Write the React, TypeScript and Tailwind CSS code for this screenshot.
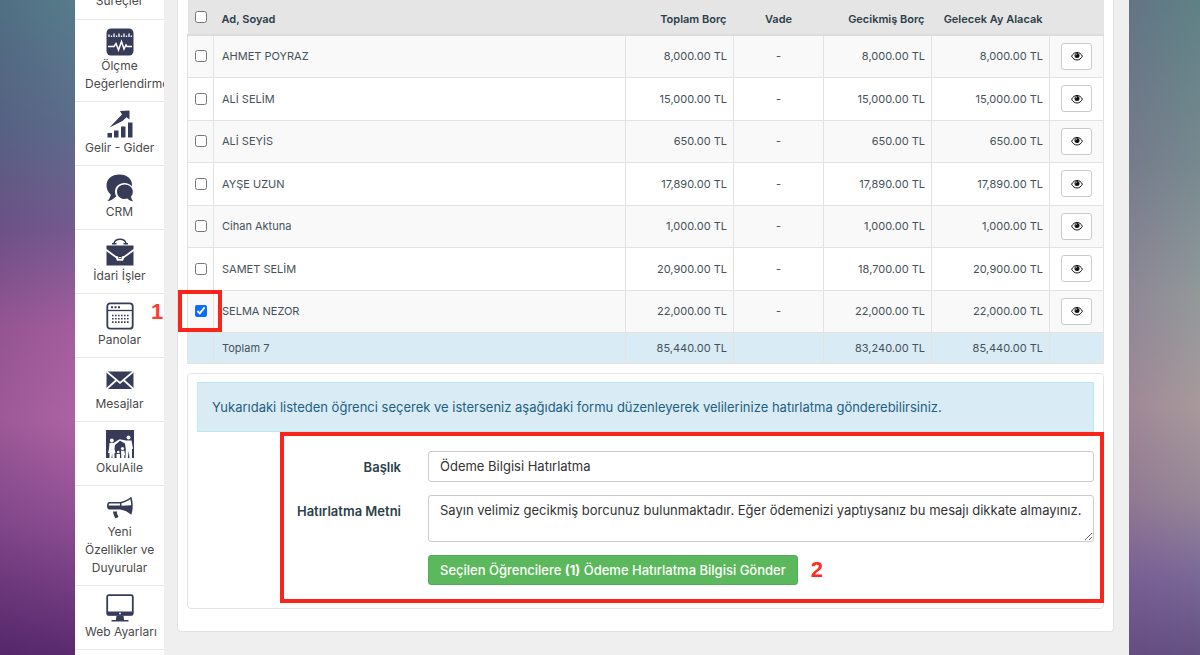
import React, { useState } from "react";

type Student = {
  name: string;
  total: string;
  overdue: string;
  nextMonth: string;
};

const students: Student[] = [
  { name: "AHMET POYRAZ", total: "8,000.00 TL", overdue: "8,000.00 TL", nextMonth: "8,000.00 TL" },
  { name: "ALİ SELİM", total: "15,000.00 TL", overdue: "15,000.00 TL", nextMonth: "15,000.00 TL" },
  { name: "ALİ SEYİS", total: "650.00 TL", overdue: "650.00 TL", nextMonth: "650.00 TL" },
  { name: "AYŞE UZUN", total: "17,890.00 TL", overdue: "17,890.00 TL", nextMonth: "17,890.00 TL" },
  { name: "Cihan Aktuna", total: "1,000.00 TL", overdue: "1,000.00 TL", nextMonth: "1,000.00 TL" },
  { name: "SAMET SELİM", total: "20,900.00 TL", overdue: "18,700.00 TL", nextMonth: "20,900.00 TL" },
  { name: "SELMA NEZOR", total: "22,000.00 TL", overdue: "22,000.00 TL", nextMonth: "22,000.00 TL" },
];

const Icon: React.FC<{ children: React.ReactNode }> = ({ children }) => (
  <svg viewBox="0 0 28 28" className="size-7 fill-[#363c58]" aria-hidden="true">
    {children}
  </svg>
);

const MeasureIcon = () => (
  <Icon>
    <rect x="0.5" y="0.5" width="27" height="27" rx="4.5" />
    <path
      d="M3 6.500V9M5.500 7.500V9M8 5.500V9M10.500 7.500V9M13 5.500V9M15.500 7.500V9M18 5.500V9M20.500 7.500V9M23 5.500V9M25.300 7.500V9"
      stroke="#fff"
      strokeWidth="1.300"
    />
    <path
      d="M2 18.500h6l2-3 2.500 6.500 3-8.500 2.500 7.500 2-4 1 1.500h5"
      fill="none"
      stroke="#fff"
      strokeWidth="1.500"
    />
  </Icon>
);

const IncomeIcon = () => (
  <Icon>
    <path d="M1.500 23H6v4.500H1.500zM8 20.500h4.500v7H8zM15 16.500h4.500v11H15zM22 12.500h4.500v15H22z" />
    <path d="M3.500 17.500 16 4.500 14 1l9.500-.5v9l-3-2.300L16.500 11z" />
  </Icon>
);

const CrmIcon = () => (
  <Icon>
    <path d="M13.500.5C5.800.5.500 5 .500 11.300c0 4 1.600 7 4.300 9.200-.3 2.600-1.500 4.800-3.500 6.500 3.200-.1 6.100-1.600 8-4l1.200-.2c-1-1.600-1.500-3.300-1.500-5.200 0-5 4-8.700 9.300-8.700 3.200 0 6 1.300 7.700 3.500C26.700 5.300 21.300.5 13.500.5z" />
    <path d="M18.700 10.600c-4.400 0-7.700 3-7.700 7.100 0 4.300 3.300 7.300 7.700 7.300.9 0 1.800-.1 2.600-.4 1.500 1.700 3.600 2.600 6 2.700-1.400-1.300-2.200-2.800-2.300-4.700 1.200-1.300 1.800-3 1.800-4.900 0-4.100-3.700-7.100-8.100-7.100z" />
  </Icon>
);

const BriefcaseIcon = () => (
  <Icon>
    <path
      d="M8 5.500C8.500 2.500 10.500 1.200 14 1.200s5.500 1.300 6 4.300"
      fill="none"
      stroke="#363c58"
      strokeWidth="1.500"
    />
    <path d="M6 5h4.500v1.500H6zM17.500 5H22v1.500h-4.500z" />
    <path d="M0.500 7.500h27v3.500l-9.500 7h-8L0.500 11z" />
    <path d="M0.500 13.200 9.800 20l1.200 2.700h6l1.200-2.700 9.300-6.800V27.500h-27z" />
    <path d="M11.500 17.500h5l-1 3.500h-3z" />
    <path d="M12.500 19h3v1.300h-3z" fill="#fff" />
  </Icon>
);

const CalendarIcon = () => (
  <Icon>
    <rect x="1.300" y="1.300" width="25.400" height="25.400" rx="3" fill="#fff" stroke="#363c58" strokeWidth="1.800" />
    <path d="M1 8.500h26" stroke="#363c58" strokeWidth="1.300" />
    <path d="M5 5.200h9" stroke="#363c58" strokeWidth="2" strokeDasharray="2 1.500" />
    <path
      d="M6 13.500h17M6 16.800h17M6 20.100h17"
      stroke="#363c58"
      strokeWidth="1.600"
      strokeDasharray="1.600 1.400"
    />
  </Icon>
);

const MailIcon = () => (
  <Icon>
    <rect x="0.500" y="5.500" width="27" height="17.500" />
    <path
      d="M.5 5.500 14 17 27.500 5.500M.5 23 10.500 14M27.500 23 17.500 14"
      fill="none"
      stroke="#fff"
      strokeWidth="1.700"
    />
  </Icon>
);

const FamilyIcon = () => (
  <Icon>
    <path d="M-.5 0h29v28h-29z" />
    <g fill="#fff">
      <circle cx="5.800" cy="10.500" r="1.900" />
      <path d="M3.500 13h4L13.500 9.300l.8 1.200L9 15l-.5 4 1 4H8.500v5h-2l-.4-4.500-.6 4.500h-2V23H2l1-4z" />
      <circle cx="22.500" cy="7.500" r="2" />
      <path d="M13.700 9.200 20 10.500h5.500l1.500 8-1 .8V28h-2.500l-.8-7-.9 7h-2.300l.3-9-.8-5.500-5.300-3z" />
      <circle cx="16.500" cy="18.500" r="1.600" />
      <path d="M15 20.700h3.300l.8 4-.8.5V28h-3z" />
      <circle cx="12.300" cy="22" r="1.300" />
      <path d="M10.500 24H14v4h-3.500z" />
    </g>
  </Icon>
);

const MegaphoneIcon = () => (
  <Icon>
    <path d="M3.500 8H14v7.500H3.500C1.800 15.500 1 14.200 1 11.800S1.800 8 3.500 8z" />
    <path d="M3.700 9.500H14v2H2.600c0-1.200.3-2 1.100-2z" fill="#fff" />
    <path d="M14 8c4.500-.8 8.200-2.500 11.300-5.200 1 2.600 1.400 5.700 1.400 9s-.4 6.400-1.400 9c-3.100-2.800-6.800-4.600-11.300-5.300z" />
    <path d="M15.500 9.300c3.500-.8 6.300-2.200 8.800-4.200.6 2 .8 4 .9 6.200l-9.700.4z" fill="#fff" />
    <path d="M7 17.500h4.300l-.5 1.500 1.700 4-3.200 1.500L7.500 20z" />
  </Icon>
);

const MonitorIcon = () => (
  <Icon>
    <rect x="1.200" y="1.200" width="25.600" height="19.600" rx="1.500" fill="#fff" stroke="#363c58" strokeWidth="1.800" />
    <path d="M1 17.500h26v3.800H1z" />
    <circle cx="14" cy="19.400" r="0.900" fill="#fff" />
    <path d="M10.500 21.500h7l.7 5h-8.400z" />
    <path d="M5.500 26h17v1.500h-17z" />
  </Icon>
);

const menu = [
  { lines: ["Ölçme", "Değerlendirme"], icon: <MeasureIcon /> },
  { lines: ["Gelir - Gider"], icon: <IncomeIcon /> },
  { lines: ["CRM"], icon: <CrmIcon /> },
  { lines: ["İdari İşler"], icon: <BriefcaseIcon /> },
  { lines: ["Panolar"], icon: <CalendarIcon /> },
  { lines: ["Mesajlar"], icon: <MailIcon /> },
  { lines: ["OkulAile"], icon: <FamilyIcon /> },
  { lines: ["Yeni", "Özellikler ve", "Duyurular"], icon: <MegaphoneIcon /> },
  { lines: ["Web Ayarları"], icon: <MonitorIcon /> },
];

const EyeIcon = () => (
  <svg viewBox="0 0 12 10" className="h-[10px] w-3" aria-hidden="true">
    <path
      d="M.6 5.200C1.900 2.800 3.700 1.400 6 1.400s4.100 1.400 5.400 3.800C10.100 7.600 8.300 9 6 9S1.900 7.600.6 5.200z"
      fill="#fff"
      stroke="#111"
      strokeWidth="1"
    />
    <circle cx="6" cy="4.500" r="2.500" fill="#111" />
    <path d="M4.600 4.300c.1-.8.600-1.300 1.400-1.400" fill="none" stroke="#fff" strokeWidth="0.700" />
  </svg>
);

const Sidebar = () => (
  <nav className="w-[89px] shrink-0 overflow-hidden bg-white text-center text-xs leading-[18px] text-[#4a4a4a]">
    <a href="#surecler" className="-mt-2 block border-b border-[#e8e8e8] pb-[9px]">
      Süreçler
    </a>
    {menu.map((item) => (
      <a
        key={item.lines[0]}
        href="#menu"
        className="flex flex-col items-center border-b border-[#e8e8e8] px-[10px] pt-2 pb-2"
      >
        {item.icon}
        <span className="w-full pt-px whitespace-nowrap">
          {item.lines.map((line) => (
            <span key={line} className="block">
              {line}
            </span>
          ))}
        </span>
      </a>
    ))}
  </nav>
);

const cell = "border border-[#e3e3e3] px-2";
const numberCell = "border border-[#e3e3e3] px-[6px] text-right";
const checkbox = "block size-3 accent-[#0b6cf5]";

const App: React.FC = () => {
  const [selected, setSelected] = useState<string[]>(["SELMA NEZOR"]);

  const toggle = (name: string) =>
    setSelected((prev) => (prev.includes(name) ? prev.filter((n) => n !== name) : [...prev, name]));

  const toggleAll = () =>
    setSelected(selected.length === students.length ? [] : students.map((s) => s.name));

  return (
    <div className="flex h-screen overflow-hidden font-['Inter',sans-serif]">
      <div className="w-[75px] shrink-0 bg-[linear-gradient(90deg,rgba(40,20,70,0.12),rgba(255,255,255,0)),linear-gradient(180deg,#567c8b_0%,#5d6b8b_20%,#75598f_35%,#a35d9d_50%,#ad63a3_64%,#8c4d92_80%,#5a2a6f_100%)]" />

      <div className="flex min-w-0 flex-1 bg-[#efefef]">
        <Sidebar />

        <main className="min-w-0 flex-1 pr-[15px] pl-[13px]">
          <div className="rounded-b border-x border-b border-[#e2e2e2] bg-white px-[9px] pb-[22px]">
            <table className="w-full table-fixed border-collapse text-[11px] leading-4 text-[#45525a]">
              <colgroup>
                <col className="w-[26px]" />
                <col />
                <col className="w-[108px]" />
                <col className="w-[90px]" />
                <col className="w-[108px]" />
                <col className="w-[118px]" />
                <col className="w-[54px]" />
              </colgroup>
              <thead>
                <tr className="h-[35px] border-b-2 border-[#dcdcdc] bg-[#e5e5e5] text-[#2b3f49]">
                  <th className="px-[7px]">
                    <input
                      type="checkbox"
                      aria-label="Tümünü seç"
                      className={checkbox}
                      checked={selected.length === students.length}
                      onChange={toggleAll}
                    />
                  </th>
                  <th className="px-2 pt-1 text-left font-semibold">Ad, Soyad</th>
                  <th className="px-[7px] pt-1 text-right font-semibold">Toplam Borç</th>
                  <th className="px-2 pt-1 text-center font-semibold">Vade</th>
                  <th className="px-[7px] pt-1 text-right font-semibold">Gecikmiş Borç</th>
                  <th className="px-[7px] pt-1 text-right font-semibold whitespace-nowrap">Gelecek Ay Alacak</th>
                  <td />
                </tr>
              </thead>
              <tbody>
                {students.map((s) => (
                  <tr key={s.name} className="h-[42px] odd:bg-[#f9f9f9] even:h-[43px]">
                    <td className="relative border border-[#e3e3e3] px-[7px]">
                      <input
                        type="checkbox"
                        aria-label={s.name}
                        className={checkbox}
                        checked={selected.includes(s.name)}
                        onChange={() => toggle(s.name)}
                      />
                      {s.name === "SELMA NEZOR" && (
                        <>
                          <span className="pointer-events-none absolute -top-px -left-[10px] h-[42px] w-11 border-4 border-[#fb241b]" />
                          <span className="absolute top-[9px] -left-[37px] font-['Liberation_Sans',sans-serif] text-[22px] leading-6 font-bold text-[#ff3b30]">
                            1
                          </span>
                        </>
                      )}
                    </td>
                    <td className={cell}>{s.name}</td>
                    <td className={numberCell}>{s.total}</td>
                    <td className={`${cell} text-center`}>-</td>
                    <td className={numberCell}>{s.overdue}</td>
                    <td className={numberCell}>{s.nextMonth}</td>
                    <td className="border border-[#e3e3e3] px-[11px]">
                      <button
                        type="button"
                        aria-label={`${s.name} detay`}
                        className="flex h-[27px] w-[31px] items-center justify-center rounded-[3px] border border-[#ccc] bg-white"
                      >
                        <EyeIcon />
                      </button>
                    </td>
                  </tr>
                ))}
              </tbody>
              <tfoot>
                <tr className="h-[31px] bg-[#d9ebf5]">
                  <td className={cell} />
                  <td className={cell}>Toplam 7</td>
                  <td className={numberCell}>85,440.00 TL</td>
                  <td className={cell} />
                  <td className={numberCell}>83,240.00 TL</td>
                  <td className={numberCell}>85,440.00 TL</td>
                  <td className={cell} />
                </tr>
              </tfoot>
            </table>

            <section className="mt-[9px] rounded border border-[#e3e3e3] px-[9px] pt-2 pb-[23px] text-[13px] leading-[18px]">
              <p className="border border-[#bce8f1] bg-[#d9ebf5] px-[14px] py-[15px] text-[#1f5f80]">
                Yukarıdaki listeden öğrenci seçerek ve isterseniz aşağıdaki formu düzenleyerek velilerinize hatırlatma
                gönderebilirsiniz.
              </p>

              <form className="relative flex flex-col gap-[13px] pt-[19px]" onSubmit={(e) => e.preventDefault()}>
                <span className="pointer-events-none absolute top-0 -right-[10px] -bottom-[18px] left-[83px] border-4 border-[#fb241b]" />
                <div className="flex items-start gap-[27px]">
                  <label htmlFor="title" className="w-[204px] shrink-0 pt-[7px] text-right font-semibold text-[#2b3f49]">
                    Başlık
                  </label>
                  <input
                    id="title"
                    type="text"
                    defaultValue="Ödeme Bilgisi Hatırlatma"
                    className="h-[31px] min-w-0 flex-1 rounded-[3px] border border-[#ccc] bg-white px-[11px] text-[#333]"
                  />
                </div>
                <div className="flex items-start gap-[27px]">
                  <label htmlFor="message" className="w-[204px] shrink-0 pt-[7px] text-right font-semibold text-[#2b3f49]">
                    Hatırlatma Metni
                  </label>
                  <textarea
                    id="message"
                    defaultValue="Sayın velimiz gecikmiş borcunuz bulunmaktadır. Eğer ödemenizi yaptıysanız bu mesajı dikkate almayınız."
                    className="h-[47px] min-w-0 flex-1 rounded-[3px] border border-[#ccc] bg-white py-[5px] pl-[11px] text-[#333]"
                  />
                </div>
                <div className="flex items-center gap-[13px] pl-[231px]">
                  <button
                    type="submit"
                    className="h-[30px] rounded-[3px] border border-[#57ad57] bg-[#5cb85c] px-[11px] font-medium text-white"
                  >
                    Seçilen Öğrencilere <b>({selected.length})</b> Ödeme Hatırlatma Bilgisi Gönder
                  </button>
                  <span className="font-['Liberation_Sans',sans-serif] text-[22px] leading-6 font-bold text-[#ff2a20]">
                    2
                  </span>
                </div>
              </form>
            </section>
          </div>
        </main>
      </div>

      <div className="w-[71px] shrink-0 bg-[linear-gradient(90deg,rgba(120,80,130,0.25),rgba(120,140,140,0.1)),linear-gradient(180deg,#5b8085_0%,#76898f_25%,#959a9c_45%,#ad9b9d_62%,#9a8798_76%,#7a649a_88%,#604a80_100%)]" />
    </div>
  );
};

export default App;
